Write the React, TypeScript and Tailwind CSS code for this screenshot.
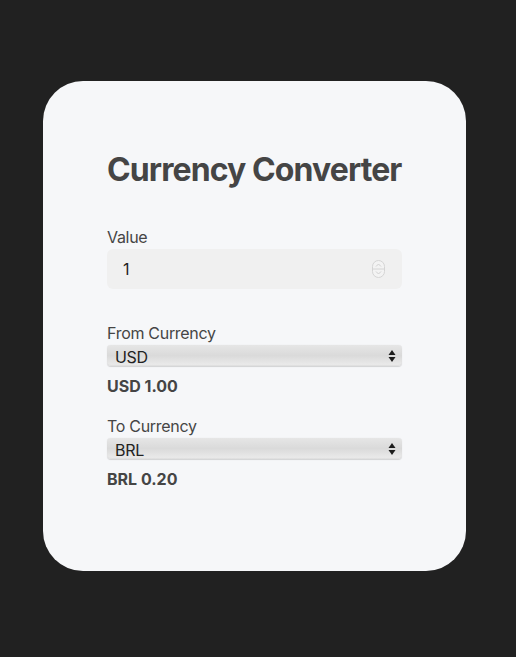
import { useState } from "react";

const rates: Record<string, number> = { USD: 1, BRL: 0.2, EUR: 1.08 };

function Spinner() {
  return (
    <svg width="13" height="18" viewBox="0 0 13 18" className="shrink-0">
      <rect x="0.5" y="0.5" width="12" height="17" rx="6" fill="#f3f3f3" stroke="#d4d4d4" />
      <line x1="0.5" y1="9" x2="12.5" y2="9" stroke="#d4d4d4" />
      <path d="M4 6.5 L6.5 4 L9 6.5" fill="none" stroke="#d0d0d0" strokeWidth="1" />
      <path d="M4 11.5 L6.5 14 L9 11.5" fill="none" stroke="#d0d0d0" strokeWidth="1" />
    </svg>
  );
}

function Arrows() {
  return (
    <svg width="8" height="14" viewBox="0 0 8 14" className="shrink-0">
      <path d="M4 1 L7.5 6 H0.5 Z" fill="#1c1c1c" />
      <path d="M4 13 L7.5 8 H0.5 Z" fill="#1c1c1c" />
    </svg>
  );
}

function CurrencySelect({ value, onChange }: { value: string; onChange: (v: string) => void }) {
  return (
    <div className="relative h-[21px] rounded-[4px] bg-gradient-to-b from-[#e6e6e6] via-[#dadada] to-[#ececec] shadow-[inset_0_-1px_1px_rgba(0,0,0,0.05),0_0.5px_1px_rgba(0,0,0,0.15)]">
      <select
        value={value}
        onChange={(e) => onChange(e.target.value)}
        className="h-full w-full appearance-none bg-transparent pl-2 pr-6 text-[16px] leading-[21px] tracking-[-0.3px] text-[#222] outline-none"
      >
        {Object.keys(rates).map((c) => (
          <option key={c} value={c}>
            {c}
          </option>
        ))}
      </select>
      <div className="pointer-events-none absolute right-[6px] top-[3.5px]">
        <Arrows />
      </div>
    </div>
  );
}

export default function App() {
  const [amount, setAmount] = useState("1");
  const [from, setFrom] = useState("USD");
  const [to, setTo] = useState("BRL");

  const n = parseFloat(amount) || 0;

  return (
    <div className="min-h-[657px] bg-[#212121] pt-[81px] font-['Inter',sans-serif] text-[#454545] tracking-[-0.3px]">
      <div className="ml-[43px] w-[423px] h-[490px] rounded-[40px] bg-[#f6f7f9] px-16 pt-[70px]">
        <h1 className="whitespace-nowrap text-[32px] font-bold leading-[38px] tracking-[-0.9px] text-[#454545]">
          Currency Converter
        </h1>

        <div className="mt-[36px]">
          <label className="block text-[16px] leading-[24px]">Value</label>
          <div className="flex h-10 items-center rounded-[6px] bg-[#f0f0f0] pl-4 pr-[17px]">
            <input
              value={amount}
              onChange={(e) => setAmount(e.target.value)}
              className="w-full bg-transparent text-[16px] text-[#222] outline-none"
            />
            <Spinner />
          </div>
        </div>

        <div className="mt-[32px]">
          <label className="block text-[16px] leading-[24px]">From Currency</label>
          <CurrencySelect value={from} onChange={setFrom} />
          <p className="mt-[10px] text-[16px] font-bold leading-[20px] tracking-normal">
            {from} {(n * rates[from] / rates.USD).toFixed(2)}
          </p>
        </div>

        <div className="mt-[18px]">
          <label className="block text-[16px] leading-[24px]">To Currency</label>
          <CurrencySelect value={to} onChange={setTo} />
          <p className="mt-[10px] text-[16px] font-bold leading-[20px] tracking-normal">
            {to} {(n * rates[to]).toFixed(2)}
          </p>
        </div>
      </div>
    </div>
  );
}
